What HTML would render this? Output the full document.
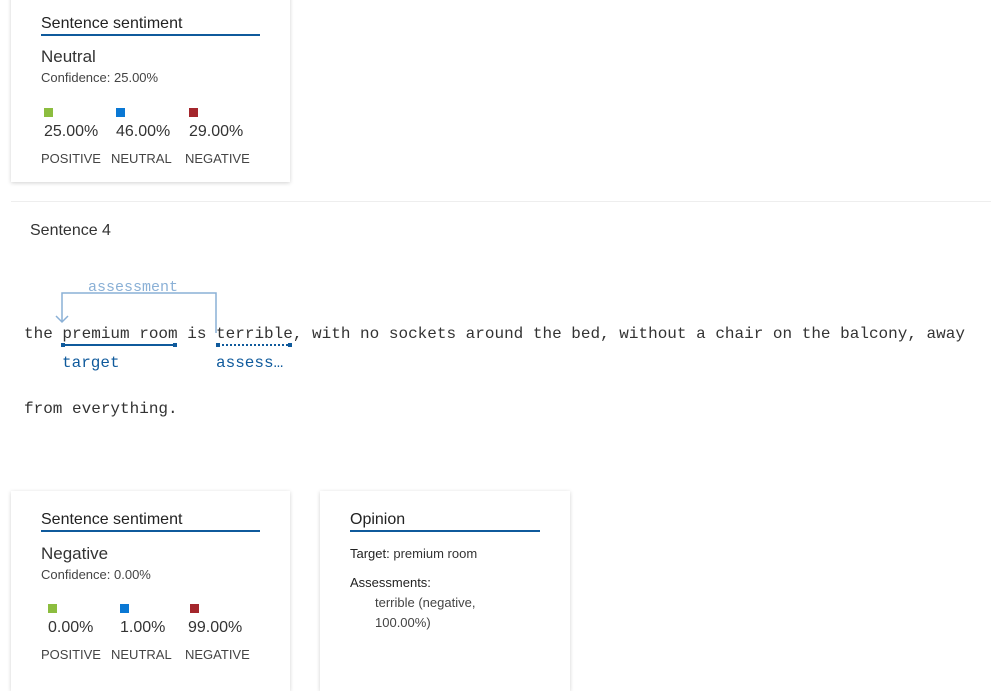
<!DOCTYPE html>
<html><head><style>
body{margin:0;width:991px;height:675px;background:#fff;position:relative;overflow:hidden;font-family:"Liberation Sans",sans-serif;color:#333}
.a{position:absolute;white-space:nowrap}
.card{position:absolute;background:#fff;box-shadow:0 1px 4px rgba(0,0,0,.18);}
.h{font-size:16px;color:#222;border-bottom:2px solid #0f5a9c;padding-bottom:1px;}
.mono{font-family:"Liberation Mono",monospace;font-size:16px;color:#333}
.sq{position:absolute;width:9px;height:9px}
.sm{font-size:13px;color:#444}
</style></head><body>
<div class="card" style="left:11px;top:-10px;width:279px;height:192px"></div>
<div class="a h" style="left:41px;top:15px;width:219px">Sentence sentiment</div>
<div class="a" style="left:41px;top:47px;font-size:17px">Neutral</div>
<div class="a sm" style="left:41px;top:70px">Confidence: 25.00%</div>
<div class="sq" style="left:44px;top:108px;background:#8cbd3f"></div>
<div class="sq" style="left:116px;top:108px;background:#0a78d4"></div>
<div class="sq" style="left:189px;top:108px;background:#a4262c"></div>
<div class="a" style="left:44px;top:123px;font-size:16px">25.00%</div>
<div class="a" style="left:116px;top:123px;font-size:16px">46.00%</div>
<div class="a" style="left:189px;top:123px;font-size:16px">29.00%</div>
<div class="a sm" style="left:41px;top:151px">POSITIVE</div>
<div class="a sm" style="left:111px;top:151px">NEUTRAL</div>
<div class="a sm" style="left:185px;top:151px">NEGATIVE</div>

<div class="a" style="left:11px;top:201px;width:980px;height:1px;background:#eee"></div>
<div class="a" style="left:30px;top:222px;font-size:16px">Sentence 4</div>

<svg class="a" style="left:0;top:270px" width="320" height="110">
<text x="88" y="21" font-family="Liberation Mono,monospace" font-size="15" fill="#8ab0d6">assessment</text>
<polyline points="62,51 62,23 216,23 216,63" fill="none" stroke="#8ab0d6" stroke-width="1.5"/>
<polyline points="56,46 62,52 68,46" fill="none" stroke="#8ab0d6" stroke-width="1.5"/>
<line x1="63" y1="75" x2="175" y2="75" stroke="#0f5a9c" stroke-width="2"/>
<rect x="61" y="73" width="4" height="4" fill="#0f5a9c"/><rect x="173" y="73" width="4" height="4" fill="#0f5a9c"/>
<line x1="218" y1="75" x2="290" y2="75" stroke="#0f5a9c" stroke-width="2" stroke-dasharray="2,2"/>
<rect x="216" y="73" width="4" height="4" fill="#0f5a9c"/><rect x="288" y="73" width="4" height="4" fill="#0f5a9c"/>
<text x="62" y="97" font-family="Liberation Mono,monospace" font-size="16" fill="#0f5a9c">target</text>
<text x="216" y="97" font-family="Liberation Mono,monospace" font-size="16" fill="#0f5a9c">assess…</text>
</svg>
<div class="a mono" style="left:24px;top:325px">the premium room is terrible, with no sockets around the bed, without a chair on the balcony, away</div>
<div class="a mono" style="left:24px;top:400px">from everything.</div>

<div class="card" style="left:11px;top:491px;width:279px;height:200px"></div>
<div class="a h" style="left:41px;top:511px;width:219px">Sentence sentiment</div>
<div class="a" style="left:41px;top:544px;font-size:17px">Negative</div>
<div class="a sm" style="left:41px;top:567px">Confidence: 0.00%</div>
<div class="sq" style="left:48px;top:604px;background:#8cbd3f"></div>
<div class="sq" style="left:120px;top:604px;background:#0a78d4"></div>
<div class="sq" style="left:190px;top:604px;background:#a4262c"></div>
<div class="a" style="left:48px;top:619px;font-size:16px">0.00%</div>
<div class="a" style="left:120px;top:619px;font-size:16px">1.00%</div>
<div class="a" style="left:188px;top:619px;font-size:16px">99.00%</div>
<div class="a sm" style="left:41px;top:647px">POSITIVE</div>
<div class="a sm" style="left:111px;top:647px">NEUTRAL</div>
<div class="a sm" style="left:185px;top:647px">NEGATIVE</div>

<div class="card" style="left:320px;top:491px;width:250px;height:200px"></div>
<div class="a h" style="left:350px;top:511px;width:190px">Opinion</div>
<div class="a sm" style="left:350px;top:546px;color:#333"><span style="color:#222">Target:</span> premium room</div>
<div class="a sm" style="left:350px;top:575px;color:#222">Assessments:</div>
<div class="a sm" style="left:375px;top:595px">terrible (negative,</div>
<div class="a sm" style="left:375px;top:615px">100.00%)</div>
</body></html>
